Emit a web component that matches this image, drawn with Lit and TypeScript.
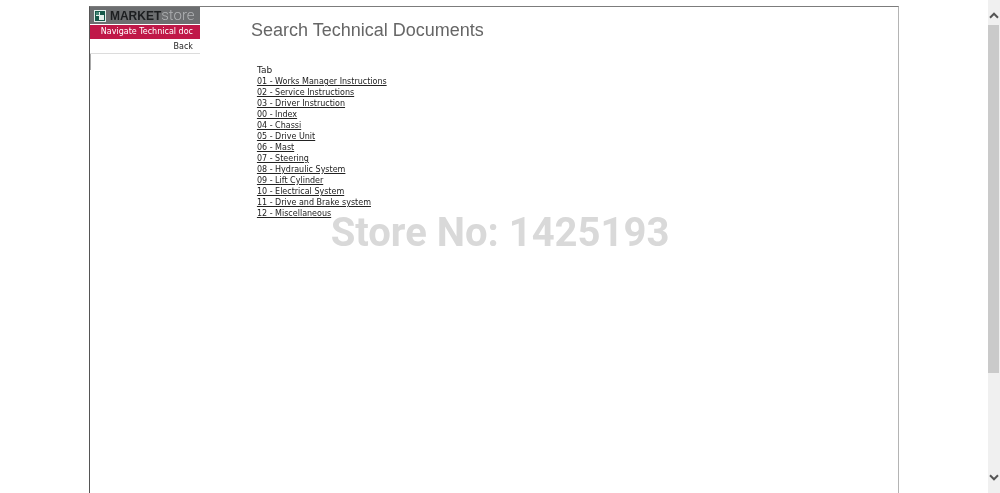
import { LitElement, html, css } from "lit";
import { customElement } from "lit/decorators.js";

const TABS = [
  "01 - Works Manager Instructions",
  "02 - Service Instructions",
  "03 - Driver Instruction",
  "00 - Index",
  "04 - Chassi",
  "05 - Drive Unit",
  "06 - Mast",
  "07 - Steering",
  "08 - Hydraulic System",
  "09 - Lift Cylinder",
  "10 - Electrical System",
  "11 - Drive and Brake system",
  "12 - Miscellaneous",
];

@customElement("app-root")
export class AppRoot extends LitElement {
  static styles = css`
    :host {
      display: flex;
      position: relative;
      height: 100vh;
      overflow: hidden;
      background: #fff;
      color: #222;
      font: 8px/11px "DejaVu Sans", Verdana, sans-serif;
    }
    * { box-sizing: border-box; }
    a { color: inherit; }
    .viewport {
      flex: 1;
      display: flex;
      justify-content: center;
      padding-top: 6px;
    }
    .frame {
      display: flex;
      width: 82%;
      border: 1px solid #7c7c7c;
      border-right-color: #b4b4b4;
      border-bottom: 0;
      border-left-color: #555;
    }
    .side { width: 110px; flex: none; }
    .brand {
      display: flex;
      align-items: center;
      gap: 4px;
      height: 17px;
      padding-left: 4px;
      background: #6c6e70;
    }
    .mark { width: 12px; height: 12px; flex: none; }
    .word {
      display: flex;
      align-items: baseline;
      font: 300 15px/17px Roboto, sans-serif;
      color: #b0b2b4;
      white-space: nowrap;
    }
    .word b {
      color: #1c1e20;
      font: 700 12px/17px "Liberation Sans", Arial, sans-serif;
    }
    .heading {
      height: 14px;
      margin: 1px 0;
      padding-right: 7px;
      background: #c01848;
      color: #fff;
      font-size: 8px;
      font-weight: 400;
      line-height: 14px;
      text-align: right;
      white-space: nowrap;
    }
    .back {
      display: block;
      height: 14px;
      padding-right: 7px;
      border-bottom: 1px solid #dcdcdc;
      line-height: 14px;
      text-align: right;
      text-decoration: none;
    }
    .submenu { height: 16px; border-left: 1px solid #aaa; }
    .main { flex: 1; padding: 11px 0 0 51px; }
    .title {
      margin: 0;
      color: #666;
      font: 18px/24px "Liberation Sans", Arial, sans-serif;
    }
    .docs { padding: 22px 0 0 6px; }
    .label { margin: 0; font-size: 9px; line-height: 12px; font-weight: 400; }
    .list { margin: 0; padding: 0; list-style: none; }
    .list li { height: 11px; }
    .list a { text-underline-offset: 1px; text-decoration-thickness: 1px; }
    .watermark {
      position: absolute;
      inset: 0;
      display: flex;
      align-items: center;
      justify-content: center;
      padding-bottom: 28px;
      color: #d9d9d9;
      font: 700 40px/48px Roboto, sans-serif;
      pointer-events: none;
      mix-blend-mode: multiply;
    }
    .scroll {
      display: flex;
      flex-direction: column;
      width: 12px;
      flex: none;
      background: #f0f0f0;
    }
    .arrow {
      display: flex;
      align-items: center;
      justify-content: center;
      height: 25px;
      flex: none;
      padding: 6px 0 0;
      border: 0;
      background: none;
    }
    .arrow.down { height: 28px; padding: 0 0 4px; }
    .arrow svg { width: 10px; height: 7px; flex: none; }
    .track { flex: 1; }
    .thumb { height: 79%; margin-right: 1px; background: #cacaca; }
  `;

  private arrow(down: boolean) {
    return html`<button class="arrow ${down ? "down" : ""}" aria-label=${down ? "Scroll down" : "Scroll up"}>
      <svg viewBox="0 0 10 7" fill="none" stroke="#555" stroke-width="2">
        <path d=${down ? "M1 1.3 5 5.3 9 1.3" : "M1 5.7 5 1.7 9 5.7"} />
      </svg>
    </button>`;
  }

  render() {
    return html`
      <div class="viewport">
        <div class="frame">
          <nav class="side">
            <div class="brand">
              <svg class="mark" viewBox="0 0 12 12">
                <path fill="#e4efeb" d="M0 0h12v12H0z" />
                <path fill="#17594a" d="M1 1h10v10H1z" />
                <path fill="#e4efeb" d="M5 2h1v8H5zM2 5h8v1H2zM6 6h4v4H6z" />
                <path fill="#438574" d="M2 2h3v3H2z" />
              </svg>
              <span class="word"><b>MARKET</b>store</span>
            </div>
            <h2 class="heading">Navigate Technical doc</h2>
            <a class="back" href="#">Back</a>
            <div class="submenu"></div>
          </nav>
          <main class="main">
            <h1 class="title">Search Technical Documents</h1>
            <section class="docs">
              <h2 class="label">Tab</h2>
              <ul class="list">
                ${TABS.map((tab) => html`<li><a href="#">${tab}</a></li>`)}
              </ul>
            </section>
          </main>
        </div>
      </div>
      <div class="scroll">
        ${this.arrow(false)}
        <div class="track"><div class="thumb"></div></div>
        ${this.arrow(true)}
      </div>
      <div class="watermark">Store No: 1425193</div>
    `;
  }
}
